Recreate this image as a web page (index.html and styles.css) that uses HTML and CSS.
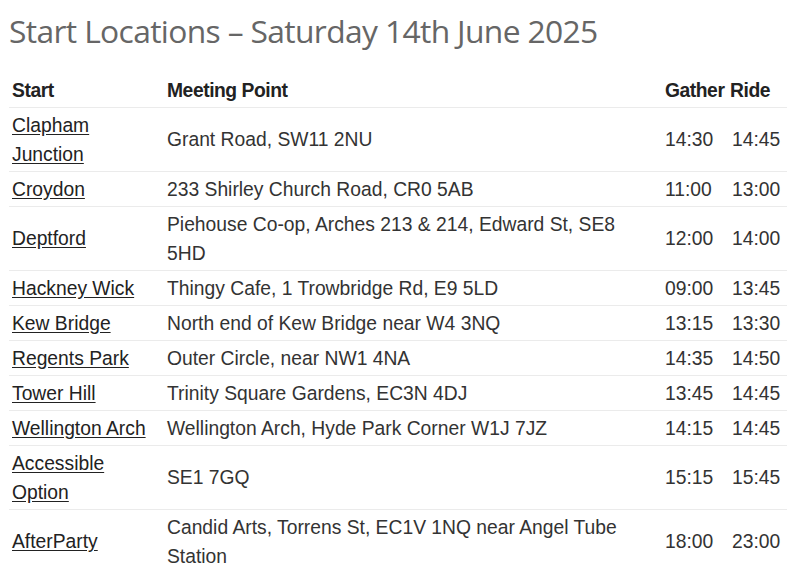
FILE: index.html
```html
<!DOCTYPE html>
<html lang="en">
<head>
    <meta charset="UTF-8" />
    <meta name="viewport" content="width=device-width, initial-scale=1" />
    <title>Start Locations</title>
    <link rel="stylesheet" href="styles.css">
</head>
<body>

<div class="page">
    <h1 class="title">Start Locations – Saturday 14th June 2025</h1>

    <table class="starts">
        <colgroup>
            <col class="col-start">
            <col class="col-meet">
            <col class="col-gather">
            <col class="col-ride">
        </colgroup>
        <thead>
            <tr>
                <th>Start</th>
                <th>Meeting Point</th>
                <th>Gather</th>
                <th class="ride">Ride</th>
            </tr>
        </thead>
        <tbody>
            <tr>
                <td><a href="#">Clapham Junction</a></td>
                <td class="meet">Grant Road, SW11 2NU</td>
                <td>14:30</td>
                <td class="ride">14:45</td>
            </tr>
            <tr>
                <td><a href="#">Croydon</a></td>
                <td class="meet">233 Shirley Church Road, CR0 5AB</td>
                <td>11:00</td>
                <td class="ride">13:00</td>
            </tr>
            <tr>
                <td><a href="#">Deptford</a></td>
                <td class="meet">Piehouse Co-op, Arches 213 &amp; 214, Edward St, SE8 5HD</td>
                <td>12:00</td>
                <td class="ride">14:00</td>
            </tr>
            <tr>
                <td><a href="#">Hackney Wick</a></td>
                <td class="meet">Thingy Cafe, 1 Trowbridge Rd, E9 5LD</td>
                <td>09:00</td>
                <td class="ride">13:45</td>
            </tr>
            <tr>
                <td><a href="#">Kew Bridge</a></td>
                <td class="meet">North end of Kew Bridge near W4 3NQ</td>
                <td>13:15</td>
                <td class="ride">13:30</td>
            </tr>
            <tr>
                <td><a href="#">Regents Park</a></td>
                <td class="meet">Outer Circle, near NW1 4NA</td>
                <td>14:35</td>
                <td class="ride">14:50</td>
            </tr>
            <tr>
                <td><a href="#">Tower Hill</a></td>
                <td class="meet">Trinity Square Gardens, EC3N 4DJ</td>
                <td>13:45</td>
                <td class="ride">14:45</td>
            </tr>
            <tr>
                <td><a href="#">Wellington Arch</a></td>
                <td class="meet">Wellington Arch, Hyde Park Corner W1J 7JZ</td>
                <td>14:15</td>
                <td class="ride">14:45</td>
            </tr>
            <tr>
                <td><a href="#">Accessible Option</a></td>
                <td class="meet">SE1 7GQ</td>
                <td>15:15</td>
                <td class="ride">15:45</td>
            </tr>
            <tr>
                <td><a href="#">AfterParty</a></td>
                <td class="meet">Candid Arts, Torrens St, EC1V 1NQ near Angel Tube Station</td>
                <td>18:00</td>
                <td class="ride">23:00</td>
            </tr>
        </tbody>
    </table>
</div>

</body>
</html>
```

FILE: styles.css
```css
    body {
        margin: 0;
        background: #fff;
        color: #333;
        font-family: "Liberation Sans", Arial, sans-serif;
    }
    .page {
        padding: 0 13px 0 9px;
    }
    .title {
        margin: 0;
        padding-top: 10px;
        height: 63px;
        font-family: "Open Sans", "Noto Sans", sans-serif;
        font-weight: 400;
        font-size: 31.8px;
        line-height: 42px;
        letter-spacing: -0.65px;
        color: #666;
    }
    .starts {
        width: 778px;
        border-collapse: collapse;
        table-layout: fixed;
        font-size: 19.3px;
        line-height: 29px;
    }
    .col-start { width: 155px; }
    .col-meet { width: 498px; }
    .col-gather { width: 65px; }
    .col-ride { width: 60px; }
    .starts th {
        text-align: left;
        font-weight: 700;
        padding: 2.5px 3px;
        color: #222;
        white-space: nowrap;
        letter-spacing: -0.45px;
    }
    .starts th.ride {
        padding-left: 3px;
    }
    .starts td {
        padding: 2.5px 3px;
        border-top: 1px solid #ebebeb;
        vertical-align: middle;
    }
    .starts td.meet {
        padding-right: 14px;
    }
    .starts td.ride {
        padding-left: 5px;
    }
    .starts a {
        color: #222;
        text-decoration: underline;
        text-underline-offset: 2px;
    }
```
